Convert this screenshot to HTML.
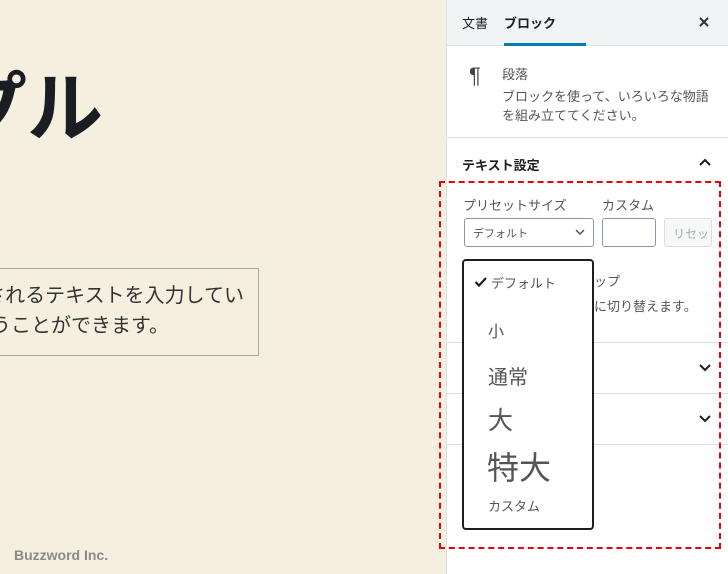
<!DOCTYPE html>
<html><head><meta charset="utf-8"><style>
*{margin:0;padding:0;box-sizing:border-box}
body{width:728px;height:574px;overflow:hidden;position:relative;background:#f5efe0;font-family:"Liberation Sans","Noto Sans CJK JP",sans-serif;color:#1e1e1e}
.abs{position:absolute;white-space:nowrap}
.side{position:absolute;left:446px;top:0;width:282px;height:574px;background:#fff;border-left:1px solid #e0e0e0;overflow:hidden}
.hr{position:absolute;left:0;width:282px;height:1px;background:#e0e0e0}
</style></head><body>
<div style="position:absolute;left:0;top:0;width:446px;height:574px;overflow:hidden">
<div class="abs" style="right:343px;top:72px;font-size:76px;font-weight:bold;color:#1a1e22;line-height:1">サンプル</div>
<div style="position:absolute;left:-10px;top:268px;width:269px;height:88px;border:1px solid #a7aaad;overflow:hidden">
  <div class="abs" style="right:14px;top:12px;font-size:20px;line-height:30px;color:#333;text-align:right">入力されるテキストを入力してい<br><span style="position:relative;right:75px">ように扱うことができます。</span></div>
</div>
<div class="abs" style="left:14px;top:547px;font-size:14px;font-weight:bold;color:#8a8a8a">Buzzword Inc.</div>
</div>

<div class="side">
  <div style="position:absolute;left:0;top:0;width:282px;height:46px;background:#f2f3f5;border-bottom:1px solid #e0e0e0"></div>
  <div class="abs" style="left:15px;top:13px;font-size:13px;color:#1e1e1e">文書</div>
  <div class="abs" style="left:57px;top:13px;font-size:13px;font-weight:bold;color:#1e1e1e">ブロック</div>
  <div style="position:absolute;left:57px;top:43px;width:82px;height:3px;background:#007cba"></div>
  <svg style="position:absolute;left:252px;top:17px" width="10" height="10"><path d="M1 1 L9 9 M9 1 L1 9" stroke="#333" stroke-width="2"/></svg>
  <div class="abs" style="left:22px;top:63px;font-size:22px;color:#444">¶</div>
  <div class="abs" style="left:55px;top:64px;font-size:13px;color:#555">段落</div>
  <div class="abs" style="left:55px;top:87px;font-size:13px;line-height:19px;color:#555">ブロックを使って、いろいろな物語<br>を組み立ててください。</div>
  <div class="hr" style="top:137px"></div>
  <div class="abs" style="left:15px;top:155px;font-size:13px;font-weight:bold;color:#1e1e1e">テキスト設定</div>
  <svg style="position:absolute;left:251px;top:157px" width="14" height="10"><path d="M2 8 L7 3 L12 8" stroke="#1e1e1e" stroke-width="2" fill="none"/></svg>
  <div class="abs" style="left:16px;top:195px;font-size:13px;color:#555">プリセットサイズ</div>
  <div class="abs" style="left:155px;top:195px;font-size:13px;color:#555">カスタム</div>
  <div style="position:absolute;left:17px;top:218px;width:130px;height:29px;border:1px solid #8d96a0;border-radius:3px"></div>
  <div class="abs" style="left:26px;top:225px;font-size:11px;color:#555">デフォルト</div>
  <svg style="position:absolute;left:128px;top:229px" width="10" height="7"><path d="M1 1 L5 5 L9 1" stroke="#555" stroke-width="1.5" fill="none"/></svg>
  <div style="position:absolute;left:155px;top:218px;width:54px;height:29px;border:1px solid #8d96a0;border-radius:3px"></div>
  <div style="position:absolute;left:217px;top:218px;width:48px;height:29px;border:1px solid #ddd;border-radius:3px;background:#f6f7f7;overflow:hidden"><div class="abs" style="left:8px;top:6px;font-size:12px;color:#aaa">リセット</div></div>
  <div class="abs" style="left:147px;top:271px;font-size:13px;color:#555">ップ</div>
  <div class="abs" style="left:147px;top:296px;font-size:13px;color:#555">に切り替えます。</div>
  <div class="hr" style="top:342px"></div>
  <svg style="position:absolute;left:251px;top:363px" width="14" height="10"><path d="M2 2 L7 7 L12 2" stroke="#1e1e1e" stroke-width="2" fill="none"/></svg>
  <div class="hr" style="top:393px"></div>
  <svg style="position:absolute;left:251px;top:414px" width="14" height="10"><path d="M2 2 L7 7 L12 2" stroke="#1e1e1e" stroke-width="2" fill="none"/></svg>
  <div class="hr" style="top:444px"></div>
</div>

<div style="position:absolute;left:462px;top:259px;width:132px;height:271px;background:#fff;border:2px solid #1e1e1e;border-radius:4px"></div>
<svg style="position:absolute;left:474px;top:276px" width="14" height="12"><path d="M1.5 6 L5 9.5 L12 2" stroke="#1e1e1e" stroke-width="2.2" fill="none"/></svg>
<div class="abs" style="left:491px;top:273px;font-size:13px;color:#555">デフォルト</div>
<div class="abs" style="left:488px;top:318px;font-size:16px;color:#555">小</div>
<div class="abs" style="left:488px;top:361px;font-size:20px;color:#555">通常</div>
<div class="abs" style="left:488px;top:401px;font-size:25px;color:#555">大</div>
<div class="abs" style="left:487px;top:443px;font-size:32px;color:#555">特大</div>
<div class="abs" style="left:488px;top:496px;font-size:13px;color:#555">カスタム</div>

<div style="position:absolute;left:439px;top:181px;width:282px;height:368px;border:2px dashed #e8000b"></div>
</body></html>
